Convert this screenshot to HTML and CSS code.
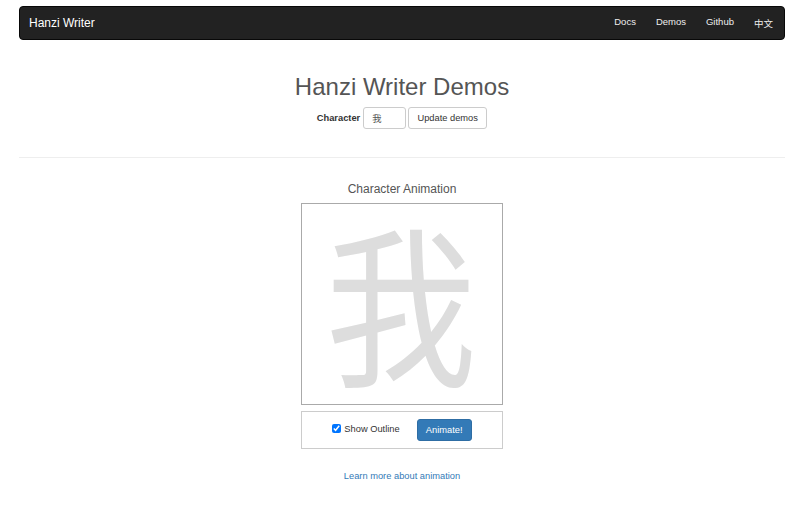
FILE: index.html
```html
<!DOCTYPE html>
<html lang="en">
<head>
    <meta charset="UTF-8">
    <meta name="viewport" content="width=device-width, initial-scale=1.0">
    <title>Hanzi Writer Demos</title>
    <link rel="stylesheet" href="styles.css">
</head>
<body>
    <div class="page">
        <nav class="navbar">
            <a class="brand" href="#">Hanzi Writer</a>
            <ul class="nav-links">
                <li><a href="#">Docs</a></li>
                <li><a href="#">Demos</a></li>
                <li><a href="#">Github</a></li>
                <li><a href="#">中文</a></li>
            </ul>
        </nav>

        <h1 class="page-title">Hanzi Writer Demos</h1>
        <form class="char-form">
            <label for="character">Character</label>
            <input type="text" id="character" name="character" value="我">
            <button type="submit" class="btn">Update demos</button>
        </form>

        <hr class="divider">

        <section class="demo">
            <h3 class="demo-title">Character Animation</h3>
            <div class="char-box">
                <span class="char-glyph">我</span>
            </div>
            <div class="controls">
                <label class="outline-toggle">
                    <input type="checkbox" checked> Show Outline
                </label>
                <button type="button" class="btn btn-primary">Animate!</button>
            </div>
            <a class="learn-more" href="#">Learn more about animation</a>
        </section>
    </div>
</body>
</html>
```

FILE: styles.css
```css
body {
    margin: 0;
    font-family: "Liberation Sans", Arial, sans-serif;
    font-size: 9.3px;
    color: #333;
    background: #fff;
}
.page {
    padding: 0 15px 0 19px;
}
.navbar {
    margin-top: 6px;
    height: 34px;
    box-sizing: border-box;
    background: #222;
    border: 1px solid #080808;
    border-radius: 4px;
    display: flex;
    align-items: center;
    justify-content: space-between;
}
.brand {
    padding: 0 9px;
    font-size: 12px;
    color: #fff;
    text-decoration: none;
}
.nav-links {
    list-style: none;
    margin: 0 1px 0 0;
    padding: 0;
    display: flex;
}
.nav-links a {
    display: block;
    padding: 0 10px;
    font-size: 9.5px;
    color: #eee;
    text-decoration: none;
    font-family: "Liberation Sans", "Noto Sans CJK SC", sans-serif;
}
.page-title {
    margin: 33px 0 0;
    font-size: 24px;
    font-weight: 400;
    line-height: 27px;
    text-align: center;
    color: #555;
}
.char-form {
    margin-top: 7px;
    display: flex;
    justify-content: center;
    align-items: center;
}
.char-form label {
    font-weight: bold;
    margin-right: 3px;
}
.char-form input {
    width: 43px;
    height: 22px;
    box-sizing: border-box;
    padding: 0 8px;
    border: 1px solid #ccc;
    border-radius: 3px;
    font-family: "Liberation Sans", "Noto Sans CJK SC", sans-serif;
    font-size: 9.3px;
    color: #555;
}
.btn {
    height: 22px;
    box-sizing: border-box;
    padding: 0 8px;
    background: #fff;
    border: 1px solid #ccc;
    border-radius: 3px;
    font-family: "Liberation Sans", Arial, sans-serif;
    font-size: 9.3px;
    color: #333;
    cursor: pointer;
}
.char-form .btn {
    margin-left: 2px;
    width: 79px;
}
.btn-primary {
    background: #337ab7;
    border-color: #2e6da4;
    color: #fff;
    width: 55px;
    padding: 0;
}
.divider {
    margin: 28px 0 0;
    border: 0;
    border-top: 1px solid #eee;
}
.demo {
    display: flex;
    flex-direction: column;
    align-items: center;
}
.demo-title {
    margin: 23px 0 0;
    font-size: 12px;
    font-weight: 400;
    line-height: 17px;
    color: #555;
}
.char-box {
    margin-top: 5px;
    width: 202px;
    height: 202px;
    box-sizing: border-box;
    border: 1px solid #aaa;
    display: flex;
    align-items: center;
    justify-content: center;
    overflow: hidden;
}
.char-glyph {
    font-family: "Noto Sans CJK SC", sans-serif;
    font-size: 172px;
    line-height: 1;
    color: #ddd;
    transform: translate(-1px, -6px) scaleX(0.88);
}
.controls {
    margin-top: 6px;
    width: 202px;
    height: 38px;
    box-sizing: border-box;
    border: 1px solid #ccc;
    display: flex;
    align-items: center;
    justify-content: center;
    gap: 17px;
}
.outline-toggle {
    display: flex;
    align-items: center;
    margin-top: -3px;
}
.outline-toggle input {
    width: 9px;
    height: 9px;
    margin: 0 3px 0 0;
}
.learn-more {
    margin-top: 21px;
    line-height: 13px;
    color: #337ab7;
    text-decoration: none;
}
```
